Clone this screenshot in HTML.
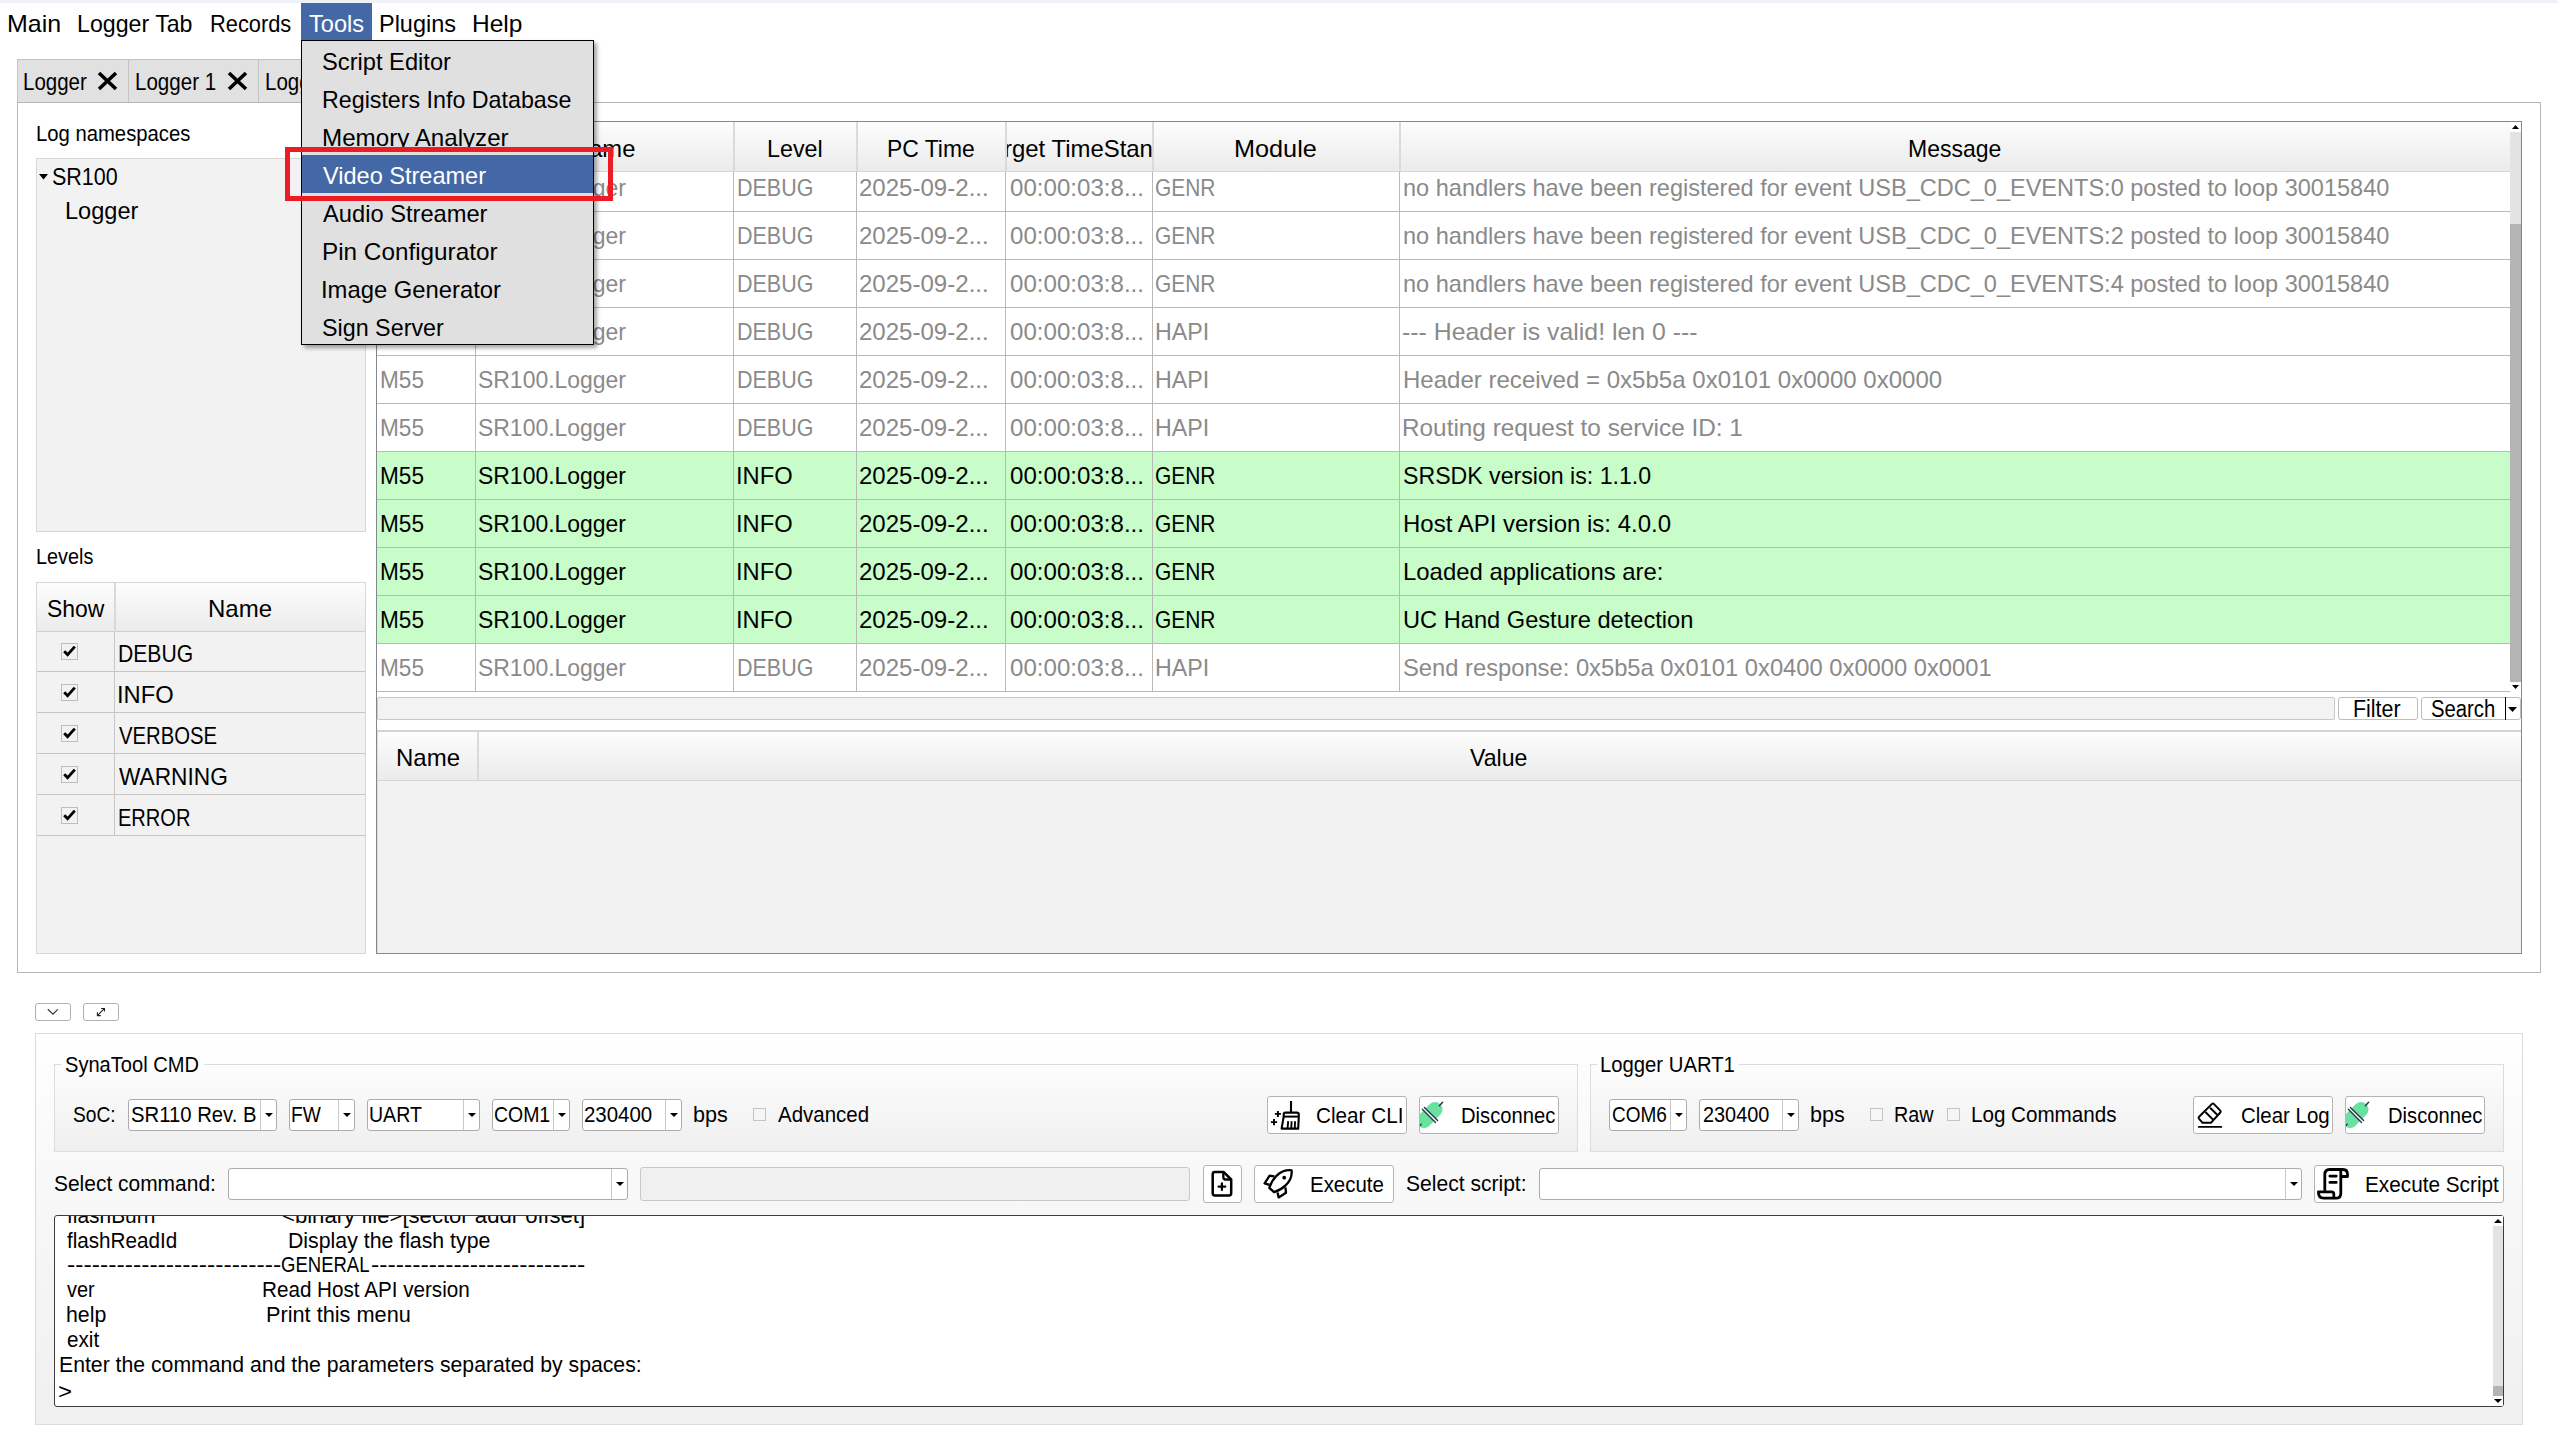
<!DOCTYPE html>
<html><head><meta charset="utf-8"><style>
html,body{margin:0;padding:0;width:2558px;height:1454px;overflow:hidden;background:#fff;position:relative;font-family:"Liberation Sans", sans-serif;}
.r{position:absolute;box-sizing:border-box;}
.t{position:absolute;white-space:pre;line-height:1;transform-origin:0 0;}
svg{position:absolute;overflow:visible;}
</style></head><body>
<div class="r" style="left:0px;top:0px;width:2558px;height:3px;background:#eef1f8;"></div>
<div class="t" style="left:6.96px;top:11.50px;font-size:24px;color:#000;transform:scaleX(1.0388);">Main</div>
<div class="t" style="left:77.03px;top:11.50px;font-size:24px;color:#000;transform:scaleX(0.9651);">Logger Tab</div>
<div class="t" style="left:210.09px;top:11.50px;font-size:24px;color:#000;transform:scaleX(0.9087);">Records</div>
<div class="t" style="left:379.02px;top:11.50px;font-size:24px;color:#000;transform:scaleX(0.9779);">Plugins</div>
<div class="t" style="left:471.98px;top:11.50px;font-size:24px;color:#000;transform:scaleX(1.0206);">Help</div>
<div class="r" style="left:301px;top:3px;width:71px;height:37px;background:#4468a6;"></div>
<div class="t" style="left:309.00px;top:11.50px;font-size:24px;color:#fff;transform:scaleX(0.9817);">Tools</div>
<div class="r" style="left:17px;top:59px;width:112px;height:44px;background:#e1e1e1;border:1px solid #c4c4c4;"></div>
<div class="r" style="left:128px;top:59px;width:131px;height:44px;background:#e1e1e1;border:1px solid #c4c4c4;"></div>
<div class="r" style="left:258px;top:59px;width:134px;height:44px;background:#e1e1e1;border:1px solid #c4c4c4;"></div>
<div class="t" style="left:23.15px;top:69.50px;font-size:24px;color:#000;transform:scaleX(0.8544);">Logger</div>
<div class="t" style="left:135.14px;top:69.50px;font-size:24px;color:#000;transform:scaleX(0.8565);">Logger 1</div>
<div class="t" style="left:265.14px;top:69.50px;font-size:24px;color:#000;transform:scaleX(0.8565);">Logger 2</div>
<svg style="left:97px;top:71px" width="21" height="20" viewBox="0 0 21 20"><path d="M2 2L19 18M19 2L2 18" stroke="#000" stroke-width="3.6" stroke-linecap="butt"/></svg>
<svg style="left:227px;top:71px" width="21" height="20" viewBox="0 0 21 20"><path d="M2 2L19 18M19 2L2 18" stroke="#000" stroke-width="3.6" stroke-linecap="butt"/></svg>
<div class="r" style="left:17px;top:102px;width:2524px;height:871px;background:#fff;border:1px solid #b6b6b6;"></div>
<div class="t" style="left:36.06px;top:124.25px;font-size:21.5px;color:#000;transform:scaleX(0.9426);">Log namespaces</div>
<div class="r" style="left:36px;top:158px;width:330px;height:374px;background:#f2f2f2;border:1px solid #d7d7d7;"></div>
<svg style="left:39px;top:174px" width="9" height="6" viewBox="0 0 9 6"><path d="M0 0H9L4.5 5.5Z" fill="#000"/></svg>
<div class="t" style="left:52.10px;top:165.00px;font-size:24px;color:#000;transform:scaleX(0.8954);">SR100</div>
<div class="t" style="left:64.52px;top:199.00px;font-size:24px;color:#000;transform:scaleX(0.9819);">Logger</div>
<div class="t" style="left:35.58px;top:547.25px;font-size:21.5px;color:#000;transform:scaleX(0.9222);">Levels</div>
<div class="r" style="left:36px;top:582px;width:330px;height:372px;background:#f2f2f2;border:1px solid #d7d7d7;"></div>
<div class="r" style="left:37px;top:583px;width:328px;height:49px;background:linear-gradient(#fdfdfd,#ebebeb);border-bottom:1px solid #cfcfcf;"></div>
<div class="r" style="left:114px;top:583px;width:2px;height:49px;background:#d9d9d9;"></div>
<div class="t" style="left:47.05px;top:596.50px;font-size:24px;color:#000;transform:scaleX(0.9547);">Show</div>
<div class="t" style="left:207.65px;top:596.50px;font-size:24px;color:#000;transform:scaleX(1.0004);">Name</div>
<div class="r" style="left:37px;top:671px;width:328px;height:1px;background:#c6c6c6;"></div>
<div class="t" style="left:118.12px;top:641.50px;font-size:24px;color:#000;transform:scaleX(0.8805);">DEBUG</div>
<div class="r" style="left:61px;top:643px;width:17px;height:17px;background:#f2f2f2;border:1px solid #bdbdbd;"></div>
<svg style="left:63px;top:645px" width="13" height="12" viewBox="0 0 13 12"><path d="M1.2 6.2L4.6 9.6L11.8 1.6" stroke="#000" stroke-width="2.8" fill="none"/></svg>
<div class="r" style="left:37px;top:712px;width:328px;height:1px;background:#c6c6c6;"></div>
<div class="t" style="left:117.02px;top:682.50px;font-size:24px;color:#000;transform:scaleX(0.9879);">INFO</div>
<div class="r" style="left:61px;top:684px;width:17px;height:17px;background:#f2f2f2;border:1px solid #bdbdbd;"></div>
<svg style="left:63px;top:686px" width="13" height="12" viewBox="0 0 13 12"><path d="M1.2 6.2L4.6 9.6L11.8 1.6" stroke="#000" stroke-width="2.8" fill="none"/></svg>
<div class="r" style="left:37px;top:753px;width:328px;height:1px;background:#c6c6c6;"></div>
<div class="t" style="left:119.00px;top:723.50px;font-size:24px;color:#000;transform:scaleX(0.8459);">VERBOSE</div>
<div class="r" style="left:61px;top:725px;width:17px;height:17px;background:#f2f2f2;border:1px solid #bdbdbd;"></div>
<svg style="left:63px;top:727px" width="13" height="12" viewBox="0 0 13 12"><path d="M1.2 6.2L4.6 9.6L11.8 1.6" stroke="#000" stroke-width="2.8" fill="none"/></svg>
<div class="r" style="left:37px;top:794px;width:328px;height:1px;background:#c6c6c6;"></div>
<div class="t" style="left:119.00px;top:764.50px;font-size:24px;color:#000;transform:scaleX(0.9459);">WARNING</div>
<div class="r" style="left:61px;top:766px;width:17px;height:17px;background:#f2f2f2;border:1px solid #bdbdbd;"></div>
<svg style="left:63px;top:768px" width="13" height="12" viewBox="0 0 13 12"><path d="M1.2 6.2L4.6 9.6L11.8 1.6" stroke="#000" stroke-width="2.8" fill="none"/></svg>
<div class="r" style="left:37px;top:835px;width:328px;height:1px;background:#c6c6c6;"></div>
<div class="t" style="left:118.16px;top:805.50px;font-size:24px;color:#000;transform:scaleX(0.8355);">ERROR</div>
<div class="r" style="left:61px;top:807px;width:17px;height:17px;background:#f2f2f2;border:1px solid #bdbdbd;"></div>
<svg style="left:63px;top:809px" width="13" height="12" viewBox="0 0 13 12"><path d="M1.2 6.2L4.6 9.6L11.8 1.6" stroke="#000" stroke-width="2.8" fill="none"/></svg>
<div class="r" style="left:114px;top:632px;width:1px;height:204px;background:#c6c6c6;"></div>
<div class="r" style="left:376px;top:121px;width:2146px;height:833px;background:#fff;border:1px solid #828790;"></div>
<div class="r" style="left:377px;top:451px;width:2133px;height:48px;background:#c8fcc8;"></div>
<div class="r" style="left:377px;top:499px;width:2133px;height:48px;background:#c8fcc8;"></div>
<div class="r" style="left:377px;top:547px;width:2133px;height:48px;background:#c8fcc8;"></div>
<div class="r" style="left:377px;top:595px;width:2133px;height:48px;background:#c8fcc8;"></div>
<div class="r" style="left:377px;top:211px;width:2133px;height:1px;background:#b9b9b9;"></div>
<div class="r" style="left:377px;top:259px;width:2133px;height:1px;background:#b9b9b9;"></div>
<div class="r" style="left:377px;top:307px;width:2133px;height:1px;background:#b9b9b9;"></div>
<div class="r" style="left:377px;top:355px;width:2133px;height:1px;background:#b9b9b9;"></div>
<div class="r" style="left:377px;top:403px;width:2133px;height:1px;background:#b9b9b9;"></div>
<div class="r" style="left:377px;top:451px;width:2133px;height:1px;background:#b9b9b9;"></div>
<div class="r" style="left:377px;top:499px;width:2133px;height:1px;background:#b9b9b9;"></div>
<div class="r" style="left:377px;top:547px;width:2133px;height:1px;background:#b9b9b9;"></div>
<div class="r" style="left:377px;top:595px;width:2133px;height:1px;background:#b9b9b9;"></div>
<div class="r" style="left:377px;top:643px;width:2133px;height:1px;background:#b9b9b9;"></div>
<div class="r" style="left:377px;top:691px;width:2133px;height:1px;background:#b9b9b9;"></div>
<div class="r" style="left:475px;top:171px;width:1px;height:520px;background:#b9b9b9;"></div>
<div class="r" style="left:733px;top:171px;width:1px;height:520px;background:#b9b9b9;"></div>
<div class="r" style="left:856px;top:171px;width:1px;height:520px;background:#b9b9b9;"></div>
<div class="r" style="left:1005px;top:171px;width:1px;height:520px;background:#b9b9b9;"></div>
<div class="r" style="left:1152px;top:171px;width:1px;height:520px;background:#b9b9b9;"></div>
<div class="r" style="left:1399px;top:171px;width:1px;height:520px;background:#b9b9b9;"></div>
<div class="t" style="left:380.06px;top:176.00px;font-size:24px;color:#8a8a8a;transform:scaleX(0.9418);">M55</div>
<div class="t" style="left:478.04px;top:176.00px;font-size:24px;color:#8a8a8a;transform:scaleX(0.9559);">SR100.Logger</div>
<div class="t" style="left:736.60px;top:176.00px;font-size:24px;color:#8a8a8a;transform:scaleX(0.8950);">DEBUG</div>
<div class="t" style="left:859.00px;top:176.00px;font-size:24px;color:#8a8a8a;transform:scaleX(1.0019);">2025-09-2...</div>
<div class="t" style="left:1009.50px;top:176.00px;font-size:24px;color:#8a8a8a;transform:scaleX(1.0040);">00:00:03:8...</div>
<div class="t" style="left:1155.13px;top:176.00px;font-size:24px;color:#8a8a8a;transform:scaleX(0.8720);">GENR</div>
<div class="t" style="left:1402.52px;top:176.00px;font-size:24px;color:#8a8a8a;transform:scaleX(0.9805);">no handlers have been registered for event USB_CDC_0_EVENTS:0 posted to loop 30015840</div>
<div class="t" style="left:380.06px;top:224.00px;font-size:24px;color:#8a8a8a;transform:scaleX(0.9418);">M55</div>
<div class="t" style="left:478.04px;top:224.00px;font-size:24px;color:#8a8a8a;transform:scaleX(0.9559);">SR100.Logger</div>
<div class="t" style="left:736.60px;top:224.00px;font-size:24px;color:#8a8a8a;transform:scaleX(0.8950);">DEBUG</div>
<div class="t" style="left:859.00px;top:224.00px;font-size:24px;color:#8a8a8a;transform:scaleX(1.0019);">2025-09-2...</div>
<div class="t" style="left:1009.50px;top:224.00px;font-size:24px;color:#8a8a8a;transform:scaleX(1.0040);">00:00:03:8...</div>
<div class="t" style="left:1155.13px;top:224.00px;font-size:24px;color:#8a8a8a;transform:scaleX(0.8720);">GENR</div>
<div class="t" style="left:1402.52px;top:224.00px;font-size:24px;color:#8a8a8a;transform:scaleX(0.9805);">no handlers have been registered for event USB_CDC_0_EVENTS:2 posted to loop 30015840</div>
<div class="t" style="left:380.06px;top:272.00px;font-size:24px;color:#8a8a8a;transform:scaleX(0.9418);">M55</div>
<div class="t" style="left:478.04px;top:272.00px;font-size:24px;color:#8a8a8a;transform:scaleX(0.9559);">SR100.Logger</div>
<div class="t" style="left:736.60px;top:272.00px;font-size:24px;color:#8a8a8a;transform:scaleX(0.8950);">DEBUG</div>
<div class="t" style="left:859.00px;top:272.00px;font-size:24px;color:#8a8a8a;transform:scaleX(1.0019);">2025-09-2...</div>
<div class="t" style="left:1009.50px;top:272.00px;font-size:24px;color:#8a8a8a;transform:scaleX(1.0040);">00:00:03:8...</div>
<div class="t" style="left:1155.13px;top:272.00px;font-size:24px;color:#8a8a8a;transform:scaleX(0.8720);">GENR</div>
<div class="t" style="left:1402.52px;top:272.00px;font-size:24px;color:#8a8a8a;transform:scaleX(0.9805);">no handlers have been registered for event USB_CDC_0_EVENTS:4 posted to loop 30015840</div>
<div class="t" style="left:380.06px;top:320.00px;font-size:24px;color:#8a8a8a;transform:scaleX(0.9418);">M55</div>
<div class="t" style="left:478.04px;top:320.00px;font-size:24px;color:#8a8a8a;transform:scaleX(0.9559);">SR100.Logger</div>
<div class="t" style="left:736.60px;top:320.00px;font-size:24px;color:#8a8a8a;transform:scaleX(0.8950);">DEBUG</div>
<div class="t" style="left:859.00px;top:320.00px;font-size:24px;color:#8a8a8a;transform:scaleX(1.0019);">2025-09-2...</div>
<div class="t" style="left:1009.50px;top:320.00px;font-size:24px;color:#8a8a8a;transform:scaleX(1.0040);">00:00:03:8...</div>
<div class="t" style="left:1155.03px;top:320.00px;font-size:24px;color:#8a8a8a;transform:scaleX(0.9672);">HAPI</div>
<div class="t" style="left:1402.46px;top:320.00px;font-size:24px;color:#8a8a8a;transform:scaleX(1.0356);">--- Header is valid! len 0 ---</div>
<div class="t" style="left:380.06px;top:368.00px;font-size:24px;color:#8a8a8a;transform:scaleX(0.9418);">M55</div>
<div class="t" style="left:478.04px;top:368.00px;font-size:24px;color:#8a8a8a;transform:scaleX(0.9559);">SR100.Logger</div>
<div class="t" style="left:736.60px;top:368.00px;font-size:24px;color:#8a8a8a;transform:scaleX(0.8950);">DEBUG</div>
<div class="t" style="left:859.00px;top:368.00px;font-size:24px;color:#8a8a8a;transform:scaleX(1.0019);">2025-09-2...</div>
<div class="t" style="left:1009.50px;top:368.00px;font-size:24px;color:#8a8a8a;transform:scaleX(1.0040);">00:00:03:8...</div>
<div class="t" style="left:1155.03px;top:368.00px;font-size:24px;color:#8a8a8a;transform:scaleX(0.9672);">HAPI</div>
<div class="t" style="left:1402.50px;top:368.00px;font-size:24px;color:#8a8a8a;transform:scaleX(1.0014);">Header received = 0x5b5a 0x0101 0x0000 0x0000</div>
<div class="t" style="left:380.06px;top:416.00px;font-size:24px;color:#8a8a8a;transform:scaleX(0.9418);">M55</div>
<div class="t" style="left:478.04px;top:416.00px;font-size:24px;color:#8a8a8a;transform:scaleX(0.9559);">SR100.Logger</div>
<div class="t" style="left:736.60px;top:416.00px;font-size:24px;color:#8a8a8a;transform:scaleX(0.8950);">DEBUG</div>
<div class="t" style="left:859.00px;top:416.00px;font-size:24px;color:#8a8a8a;transform:scaleX(1.0019);">2025-09-2...</div>
<div class="t" style="left:1009.50px;top:416.00px;font-size:24px;color:#8a8a8a;transform:scaleX(1.0040);">00:00:03:8...</div>
<div class="t" style="left:1155.03px;top:416.00px;font-size:24px;color:#8a8a8a;transform:scaleX(0.9672);">HAPI</div>
<div class="t" style="left:1402.49px;top:416.00px;font-size:24px;color:#8a8a8a;transform:scaleX(1.0140);">Routing request to service ID: 1</div>
<div class="t" style="left:380.06px;top:464.00px;font-size:24px;color:#000;transform:scaleX(0.9418);">M55</div>
<div class="t" style="left:478.04px;top:464.00px;font-size:24px;color:#000;transform:scaleX(0.9559);">SR100.Logger</div>
<div class="t" style="left:735.52px;top:464.00px;font-size:24px;color:#000;transform:scaleX(0.9879);">INFO</div>
<div class="t" style="left:859.00px;top:464.00px;font-size:24px;color:#000;transform:scaleX(1.0019);">2025-09-2...</div>
<div class="t" style="left:1009.50px;top:464.00px;font-size:24px;color:#000;transform:scaleX(1.0040);">00:00:03:8...</div>
<div class="t" style="left:1155.13px;top:464.00px;font-size:24px;color:#000;transform:scaleX(0.8720);">GENR</div>
<div class="t" style="left:1402.54px;top:464.00px;font-size:24px;color:#000;transform:scaleX(0.9637);">SRSDK version is: 1.1.0</div>
<div class="t" style="left:380.06px;top:512.00px;font-size:24px;color:#000;transform:scaleX(0.9418);">M55</div>
<div class="t" style="left:478.04px;top:512.00px;font-size:24px;color:#000;transform:scaleX(0.9559);">SR100.Logger</div>
<div class="t" style="left:735.52px;top:512.00px;font-size:24px;color:#000;transform:scaleX(0.9879);">INFO</div>
<div class="t" style="left:859.00px;top:512.00px;font-size:24px;color:#000;transform:scaleX(1.0019);">2025-09-2...</div>
<div class="t" style="left:1009.50px;top:512.00px;font-size:24px;color:#000;transform:scaleX(1.0040);">00:00:03:8...</div>
<div class="t" style="left:1155.13px;top:512.00px;font-size:24px;color:#000;transform:scaleX(0.8720);">GENR</div>
<div class="t" style="left:1402.50px;top:512.00px;font-size:24px;color:#000;transform:scaleX(0.9996);">Host API version is: 4.0.0</div>
<div class="t" style="left:380.06px;top:560.00px;font-size:24px;color:#000;transform:scaleX(0.9418);">M55</div>
<div class="t" style="left:478.04px;top:560.00px;font-size:24px;color:#000;transform:scaleX(0.9559);">SR100.Logger</div>
<div class="t" style="left:735.52px;top:560.00px;font-size:24px;color:#000;transform:scaleX(0.9879);">INFO</div>
<div class="t" style="left:859.00px;top:560.00px;font-size:24px;color:#000;transform:scaleX(1.0019);">2025-09-2...</div>
<div class="t" style="left:1009.50px;top:560.00px;font-size:24px;color:#000;transform:scaleX(1.0040);">00:00:03:8...</div>
<div class="t" style="left:1155.13px;top:560.00px;font-size:24px;color:#000;transform:scaleX(0.8720);">GENR</div>
<div class="t" style="left:1402.50px;top:560.00px;font-size:24px;color:#000;transform:scaleX(0.9959);">Loaded applications are:</div>
<div class="t" style="left:380.06px;top:608.00px;font-size:24px;color:#000;transform:scaleX(0.9418);">M55</div>
<div class="t" style="left:478.04px;top:608.00px;font-size:24px;color:#000;transform:scaleX(0.9559);">SR100.Logger</div>
<div class="t" style="left:735.52px;top:608.00px;font-size:24px;color:#000;transform:scaleX(0.9879);">INFO</div>
<div class="t" style="left:859.00px;top:608.00px;font-size:24px;color:#000;transform:scaleX(1.0019);">2025-09-2...</div>
<div class="t" style="left:1009.50px;top:608.00px;font-size:24px;color:#000;transform:scaleX(1.0040);">00:00:03:8...</div>
<div class="t" style="left:1155.13px;top:608.00px;font-size:24px;color:#000;transform:scaleX(0.8720);">GENR</div>
<div class="t" style="left:1402.52px;top:608.00px;font-size:24px;color:#000;transform:scaleX(0.9847);">UC Hand Gesture detection</div>
<div class="t" style="left:380.06px;top:656.00px;font-size:24px;color:#8a8a8a;transform:scaleX(0.9418);">M55</div>
<div class="t" style="left:478.04px;top:656.00px;font-size:24px;color:#8a8a8a;transform:scaleX(0.9559);">SR100.Logger</div>
<div class="t" style="left:736.60px;top:656.00px;font-size:24px;color:#8a8a8a;transform:scaleX(0.8950);">DEBUG</div>
<div class="t" style="left:859.00px;top:656.00px;font-size:24px;color:#8a8a8a;transform:scaleX(1.0019);">2025-09-2...</div>
<div class="t" style="left:1009.50px;top:656.00px;font-size:24px;color:#8a8a8a;transform:scaleX(1.0040);">00:00:03:8...</div>
<div class="t" style="left:1155.03px;top:656.00px;font-size:24px;color:#8a8a8a;transform:scaleX(0.9672);">HAPI</div>
<div class="t" style="left:1402.51px;top:656.00px;font-size:24px;color:#8a8a8a;transform:scaleX(0.9891);">Send response: 0x5b5a 0x0101 0x0400 0x0000 0x0001</div>
<div class="r" style="left:377px;top:122px;width:2133px;height:50px;background:linear-gradient(#fdfdfd,#ebebeb);border-bottom:1px solid #d5d5d5;"></div>
<div class="r" style="left:475px;top:122px;width:2px;height:49px;background:#dadada;"></div>
<div class="r" style="left:733px;top:122px;width:2px;height:49px;background:#dadada;"></div>
<div class="r" style="left:856px;top:122px;width:2px;height:49px;background:#dadada;"></div>
<div class="r" style="left:1005px;top:122px;width:2px;height:49px;background:#dadada;"></div>
<div class="r" style="left:1152px;top:122px;width:2px;height:49px;background:#dadada;"></div>
<div class="r" style="left:1399px;top:122px;width:2px;height:49px;background:#dadada;"></div>
<div class="t" style="left:572.01px;top:136.50px;font-size:24px;color:#000;transform:scaleX(0.9893);">Name</div>
<div class="t" style="left:767.33px;top:136.50px;font-size:24px;color:#000;transform:scaleX(0.9702);">Level</div>
<div class="t" style="left:886.65px;top:136.50px;font-size:24px;color:#000;transform:scaleX(0.9528);">PC Time</div>
<div style="position:absolute;left:1007px;top:122px;width:145px;height:49px;overflow:hidden">
<div class="t" style="left:-3.00px;top:14.50px;font-size:24px;color:#000;transform:scaleX(0.9967);">rget TimeStan</div>
</div>
<div class="t" style="left:1234.25px;top:136.50px;font-size:24px;color:#000;transform:scaleX(1.0521);">Module</div>
<div class="t" style="left:1908.04px;top:136.50px;font-size:24px;color:#000;transform:scaleX(0.9580);">Message</div>
<div class="r" style="left:2510px;top:122px;width:11px;height:569px;background:#e3e3e3;"></div>
<div class="r" style="left:2510px;top:122px;width:11px;height:10px;background:#fff;"></div>
<div class="r" style="left:2510px;top:682px;width:11px;height:9px;background:#fff;"></div>
<div class="r" style="left:2510px;top:224px;width:11px;height:458px;background:#b4b4b4;"></div>
<svg style="left:2512px;top:125px" width="7" height="4" viewBox="0 0 7 4"><path d="M0 4H7L3.5 0Z" fill="#000"/></svg>
<svg style="left:2512px;top:685px" width="7" height="4" viewBox="0 0 7 4"><path d="M0 0H7L3.5 4Z" fill="#000"/></svg>
<div class="r" style="left:377px;top:697px;width:1958px;height:23px;background:#f3f3f3;border:1px solid #c8c8c8;border-radius:2px;"></div>
<div class="r" style="left:2338px;top:697px;width:80px;height:23px;background:#fff;border:1px solid #bdbdbd;border-radius:3px;"></div>
<div class="t" style="left:2353.07px;top:697.50px;font-size:23px;color:#000;transform:scaleX(0.9316);">Filter</div>
<div class="r" style="left:2421px;top:697px;width:100px;height:23px;background:#fff;border:1px solid #bdbdbd;border-radius:3px;"></div>
<div class="t" style="left:2431.12px;top:697.50px;font-size:23px;color:#000;transform:scaleX(0.8821);">Search</div>
<div class="r" style="left:2505px;top:697px;width:1px;height:23px;background:#000;"></div>
<svg style="left:2508px;top:707px" width="9" height="5" viewBox="0 0 9 5"><path d="M0 0H9L4.5 5Z" fill="#000"/></svg>
<div class="r" style="left:377px;top:730px;width:2144px;height:223px;background:#f2f2f2;border-top:2px solid #d4d4d4;border-left:1px solid #dcdcdc;"></div>
<div class="r" style="left:378px;top:732px;width:2143px;height:49px;background:linear-gradient(#fdfdfd,#ebebeb);border-bottom:1px solid #d5d5d5;"></div>
<div class="r" style="left:477px;top:732px;width:2px;height:48px;background:#dadada;"></div>
<div class="t" style="left:395.60px;top:745.50px;font-size:24px;color:#000;transform:scaleX(1.0004);">Name</div>
<div class="t" style="left:1469.50px;top:745.50px;font-size:24px;color:#000;transform:scaleX(0.9620);">Value</div>
<div class="r" style="left:35px;top:1003px;width:36px;height:18px;background:#fff;border:1px solid #b0b0b0;border-radius:3px;"></div>
<div class="r" style="left:83px;top:1003px;width:36px;height:18px;background:#fff;border:1px solid #b0b0b0;border-radius:3px;"></div>
<svg style="left:44px;top:1005px" width="18" height="14" viewBox="44 1005 18 14"><path d="M47.8 1009.3L53 1014.2L57.8 1009.3" stroke="#333" stroke-width="1.2" fill="none"/></svg>
<svg style="left:94px;top:1005px" width="14" height="14" viewBox="94 1005 14 14"><path d="M97.6 1015.3L104.3 1008.6M101.1 1008.5H104.5V1011.6M97.4 1012.2V1015.6H100.8" stroke="#222" stroke-width="1.1" fill="none"/></svg>
<div class="r" style="left:35px;top:1033px;width:2488px;height:392px;background:linear-gradient(#ffffff,#f9f9f9 30%,#f0f0f0);border:1px solid #dcdcdc;"></div>
<div class="r" style="left:54px;top:1064px;width:1524px;height:88px;background:linear-gradient(#fdfdfd,#efefef);border:1px solid #dcdcdc;border-top:none;"></div>
<div class="r" style="left:54px;top:1064px;width:7px;height:1px;background:#dcdcdc;"></div>
<div class="r" style="left:204px;top:1064px;width:1374px;height:1px;background:#dcdcdc;"></div>
<div class="t" style="left:65.00px;top:1054.75px;font-size:21.5px;color:#000;transform:scaleX(0.9338);">SynaTool CMD</div>
<div class="r" style="left:1590px;top:1064px;width:914px;height:88px;background:linear-gradient(#fdfdfd,#efefef);border:1px solid #dcdcdc;border-top:none;"></div>
<div class="r" style="left:1590px;top:1064px;width:7px;height:1px;background:#dcdcdc;"></div>
<div class="r" style="left:1739px;top:1064px;width:765px;height:1px;background:#dcdcdc;"></div>
<div class="t" style="left:1600.36px;top:1054.75px;font-size:21.5px;color:#000;transform:scaleX(0.9429);">Logger UART1</div>
<div class="t" style="left:73.20px;top:1105.05px;font-size:21.5px;color:#000;transform:scaleX(0.8927);">SoC:</div>
<div class="r" style="left:128px;top:1099px;width:149px;height:32px;background:#fff;border:1px solid #acacac;border-radius:3px;"></div>
<div class="r" style="left:260px;top:1100px;width:1px;height:30px;background:#c8c8c8;"></div>
<svg style="left:264.5px;top:1113.0px" width="8" height="4" viewBox="0 0 8 4"><path d="M0 0H8L4 4Z" fill="#000"/></svg>
<div class="t" style="left:131.00px;top:1105.25px;font-size:21.5px;color:#000;transform:scaleX(0.9435);">SR110 Rev. B</div>
<div class="r" style="left:289px;top:1099px;width:66px;height:32px;background:#fff;border:1px solid #acacac;border-radius:3px;"></div>
<div class="r" style="left:338px;top:1100px;width:1px;height:30px;background:#c8c8c8;"></div>
<svg style="left:342.5px;top:1113.0px" width="8" height="4" viewBox="0 0 8 4"><path d="M0 0H8L4 4Z" fill="#000"/></svg>
<div class="t" style="left:291.11px;top:1105.25px;font-size:21.5px;color:#000;transform:scaleX(0.8903);">FW</div>
<div class="r" style="left:367px;top:1099px;width:113px;height:32px;background:#fff;border:1px solid #acacac;border-radius:3px;"></div>
<div class="r" style="left:463px;top:1100px;width:1px;height:30px;background:#c8c8c8;"></div>
<svg style="left:467.5px;top:1113.0px" width="8" height="4" viewBox="0 0 8 4"><path d="M0 0H8L4 4Z" fill="#000"/></svg>
<div class="t" style="left:369.09px;top:1105.25px;font-size:21.5px;color:#000;transform:scaleX(0.9087);">UART</div>
<div class="r" style="left:492px;top:1099px;width:78px;height:32px;background:#fff;border:1px solid #acacac;border-radius:3px;"></div>
<div class="r" style="left:553px;top:1100px;width:1px;height:30px;background:#c8c8c8;"></div>
<svg style="left:557.5px;top:1113.0px" width="8" height="4" viewBox="0 0 8 4"><path d="M0 0H8L4 4Z" fill="#000"/></svg>
<div class="t" style="left:494.10px;top:1105.25px;font-size:21.5px;color:#000;transform:scaleX(0.9043);">COM1</div>
<div class="r" style="left:582px;top:1099px;width:100px;height:32px;background:#fff;border:1px solid #acacac;border-radius:3px;"></div>
<div class="r" style="left:665px;top:1100px;width:1px;height:30px;background:#c8c8c8;"></div>
<svg style="left:669.5px;top:1113.0px" width="8" height="4" viewBox="0 0 8 4"><path d="M0 0H8L4 4Z" fill="#000"/></svg>
<div class="t" style="left:584.05px;top:1105.25px;font-size:21.5px;color:#000;transform:scaleX(0.9507);">230400</div>
<div class="t" style="left:693.30px;top:1105.05px;font-size:21.5px;color:#000;transform:scaleX(1.0026);">bps</div>
<div class="r" style="left:753px;top:1108px;width:13px;height:13px;background:#f6f6f6;border:1px solid #c4c4c4;"></div>
<div class="t" style="left:777.60px;top:1105.05px;font-size:21.5px;color:#000;transform:scaleX(0.9528);">Advanced</div>
<div class="r" style="left:1267px;top:1096px;width:140px;height:38px;background:#fff;border:1px solid #b4b4b4;border-radius:3px;"></div>
<div class="t" style="left:1316.44px;top:1106.25px;font-size:21.5px;color:#000;transform:scaleX(0.9632);">Clear CLI</div>
<div class="r" style="left:1419px;top:1096px;width:140px;height:38px;background:#fff;border:1px solid #b4b4b4;border-radius:3px;"></div>
<div class="t" style="left:1461.36px;top:1106.25px;font-size:21.5px;color:#000;transform:scaleX(0.9395);">Disconnec</div>
<div class="r" style="left:2193px;top:1096px;width:140px;height:38px;background:#fff;border:1px solid #b4b4b4;border-radius:3px;"></div>
<div class="t" style="left:2241.05px;top:1106.25px;font-size:21.5px;color:#000;transform:scaleX(0.9511);">Clear Log</div>
<div class="r" style="left:2345px;top:1096px;width:140px;height:38px;background:#fff;border:1px solid #b4b4b4;border-radius:3px;"></div>
<div class="t" style="left:2387.56px;top:1106.25px;font-size:21.5px;color:#000;transform:scaleX(0.9395);">Disconnec</div>
<div class="r" style="left:1609px;top:1099px;width:78px;height:32px;background:#fff;border:1px solid #acacac;border-radius:3px;"></div>
<div class="r" style="left:1670px;top:1100px;width:1px;height:30px;background:#c8c8c8;"></div>
<svg style="left:1674.5px;top:1113.0px" width="8" height="4" viewBox="0 0 8 4"><path d="M0 0H8L4 4Z" fill="#000"/></svg>
<div class="t" style="left:1611.62px;top:1105.25px;font-size:21.5px;color:#000;transform:scaleX(0.8829);">COM6</div>
<div class="r" style="left:1699px;top:1099px;width:100px;height:32px;background:#fff;border:1px solid #acacac;border-radius:3px;"></div>
<div class="r" style="left:1782px;top:1100px;width:1px;height:30px;background:#c8c8c8;"></div>
<svg style="left:1786.5px;top:1113.0px" width="8" height="4" viewBox="0 0 8 4"><path d="M0 0H8L4 4Z" fill="#000"/></svg>
<div class="t" style="left:1703.28px;top:1105.25px;font-size:21.5px;color:#000;transform:scaleX(0.9239);">230400</div>
<div class="t" style="left:1810.00px;top:1105.05px;font-size:21.5px;color:#000;transform:scaleX(1.0026);">bps</div>
<div class="r" style="left:1870px;top:1108px;width:13px;height:13px;background:#f6f6f6;border:1px solid #c4c4c4;"></div>
<div class="t" style="left:1894.08px;top:1105.05px;font-size:21.5px;color:#000;transform:scaleX(0.9180);">Raw</div>
<div class="r" style="left:1947px;top:1108px;width:13px;height:13px;background:#f6f6f6;border:1px solid #c4c4c4;"></div>
<div class="t" style="left:1971.04px;top:1105.05px;font-size:21.5px;color:#000;transform:scaleX(0.9585);">Log Commands</div>
<div class="t" style="left:53.80px;top:1174.25px;font-size:21.5px;color:#000;transform:scaleX(0.9744);">Select command:</div>
<div class="r" style="left:228px;top:1168px;width:400px;height:32px;background:#fff;border:1px solid #acacac;border-radius:3px;"></div>
<div class="r" style="left:611px;top:1169px;width:1px;height:30px;background:#c8c8c8;"></div>
<svg style="left:615.5px;top:1182.0px" width="8" height="4" viewBox="0 0 8 4"><path d="M0 0H8L4 4Z" fill="#000"/></svg>
<div class="r" style="left:640px;top:1167px;width:550px;height:34px;background:#f0f0f0;border:1px solid #c8c8c8;border-radius:3px;"></div>
<div class="r" style="left:1203px;top:1165px;width:39px;height:38px;background:#fff;border:1px solid #b4b4b4;border-radius:3px;"></div>
<div class="r" style="left:1254px;top:1165px;width:140px;height:38px;background:#fff;border:1px solid #b4b4b4;border-radius:3px;"></div>
<div class="t" style="left:1309.85px;top:1175.25px;font-size:21.5px;color:#000;transform:scaleX(0.9508);">Execute</div>
<div class="t" style="left:1406.00px;top:1174.25px;font-size:21.5px;color:#000;transform:scaleX(0.9796);">Select script:</div>
<div class="r" style="left:1539px;top:1168px;width:763px;height:32px;background:#fff;border:1px solid #acacac;border-radius:3px;"></div>
<div class="r" style="left:2285px;top:1169px;width:1px;height:30px;background:#c8c8c8;"></div>
<svg style="left:2289.5px;top:1182.0px" width="8" height="4" viewBox="0 0 8 4"><path d="M0 0H8L4 4Z" fill="#000"/></svg>
<div class="r" style="left:2314px;top:1165px;width:190px;height:38px;background:#fff;border:1px solid #b4b4b4;border-radius:3px;"></div>
<div class="t" style="left:2364.63px;top:1175.25px;font-size:21.5px;color:#000;transform:scaleX(0.9655);">Execute Script</div>
<svg style="left:1268px;top:1098px;overflow:hidden;" width="36" height="34" viewBox="1268 1098 36 34"><path d="M1291 1101V1112.8" stroke="#000" stroke-width="2.1"/><path d="M1285.5 1112.6H1296.8Q1298.8 1112.6 1298.8 1114.6V1116.5L1298.2 1128.6H1281.6L1283.7 1116.5V1114.6Q1283.7 1112.6 1285.5 1112.6Z" stroke="#000" stroke-width="2.1" fill="none" stroke-linejoin="round"/><path d="M1283.7 1116.6H1298.8" stroke="#000" stroke-width="2"/><path d="M1288.2 1121.2L1287.6 1128M1291.6 1121.2L1291.3 1128M1295 1121.2L1294.8 1128" stroke="#000" stroke-width="1.9"/><path d="M1277.9 1110.9V1116.9M1274.9 1113.9H1280.9M1274 1119V1125.2M1270.9 1122.1H1277.1" stroke="#000" stroke-width="1.9"/></svg>
<svg style="left:1420px;top:1097px;overflow:hidden;" width="30" height="36" viewBox="1420 1097 30 36"><path d="M1435 1109.5L1424.1 1120.4" stroke="#68e29e" stroke-width="15" stroke-linecap="round"/><path d="M1423.4 1108.4L1436.6 1121.6" stroke="#fff" stroke-width="2.2"/><path d="M1424.4 1107.4L1437.6 1120.6M1422.3 1109.3L1435.5 1122.5" stroke="#28324b" stroke-width="1.35" stroke-linecap="round"/><path d="M1439.4 1105.7L1442.6 1102.3M1418 1127.5L1421.2 1124.3" stroke="#28324b" stroke-width="1.5" stroke-linecap="round"/></svg>
<svg style="left:2346px;top:1097px;overflow:hidden;" width="30" height="36" viewBox="2346 1097 30 36"><path d="M2361 1109.5L2350.1 1120.4" stroke="#68e29e" stroke-width="15" stroke-linecap="round"/><path d="M2349.4 1108.4L2362.6 1121.6" stroke="#fff" stroke-width="2.2"/><path d="M2350.4 1107.4L2363.6 1120.6M2348.3 1109.3L2361.5 1122.5" stroke="#28324b" stroke-width="1.35" stroke-linecap="round"/><path d="M2365.4 1105.7L2368.6 1102.3M2344 1127.5L2347.2 1124.3" stroke="#28324b" stroke-width="1.5" stroke-linecap="round"/></svg>
<svg style="left:2195px;top:1100px;overflow:hidden;" width="30" height="30" viewBox="2195 1100 30 30"><path d="M2202.6 1122.8L2198.9 1118.6Q2198.2 1117.7 2199.1 1116.8L2212 1103.9Q2212.9 1103 2213.8 1103.9L2220.3 1110.6Q2221.2 1111.6 2220.3 1112.5L2210.9 1122.8Z" stroke="#000" stroke-width="2" fill="none" stroke-linejoin="round"/><path d="M2205.4 1112L2213 1119.6M2210.1 1107.8L2217.4 1115" stroke="#000" stroke-width="2"/><path d="M2198.8 1126.9H2221.3" stroke="#000" stroke-width="1.9" stroke-linecap="round"/></svg>
<svg style="left:1206px;top:1167px;overflow:hidden;" width="32" height="34" viewBox="1206 1167 32 34"><path d="M1214.9 1171.9H1223.5L1231.2 1179.5V1193.2Q1231.2 1195.4 1229 1195.4H1214.9Q1212.7 1195.4 1212.7 1193.2V1174.1Q1212.7 1171.9 1214.9 1171.9Z" stroke="#000" stroke-width="2.5" fill="none" stroke-linejoin="round"/><path d="M1223.3 1172.5V1177Q1223.3 1179.5 1225.8 1179.5H1230.6" stroke="#000" stroke-width="2.3" fill="none"/><path d="M1221.9 1183.3V1190M1218.5 1186.6H1225.3" stroke="#000" stroke-width="2.2" stroke-linecap="round"/></svg>
<svg style="left:1260px;top:1165px;overflow:hidden;" width="36" height="36" viewBox="1260 1165 36 36"><path d="M1291.6 1170.3Q1283 1169.5 1276.5 1175.8Q1271.5 1181 1269.3 1187.8L1274 1192.2Q1280.5 1190.3 1285.6 1185.4Q1292.5 1178.8 1291.6 1170.3Z" stroke="#000" stroke-width="2.3" fill="none" stroke-linejoin="round"/><path d="M1274.4 1176.4L1269.6 1175.7L1264.6 1183.4L1269.6 1184.9" stroke="#000" stroke-width="2.3" fill="none" stroke-linejoin="round"/><path d="M1285.4 1187.4L1286 1192.8L1278.6 1197.4L1277.6 1192.4" stroke="#000" stroke-width="2.3" fill="none" stroke-linejoin="round"/><circle cx="1284.2" cy="1177.7" r="1.9" fill="#000"/></svg>
<svg style="left:2315px;top:1166px;overflow:hidden;" width="36" height="36" viewBox="2315 1166 36 36"><path d="M2324.8 1190.8V1174.6Q2324.8 1169.5 2329.6 1169.5H2343Q2347.5 1169.5 2347.5 1174.4V1176.5H2341.3" stroke="#000" stroke-width="2.8" fill="none" stroke-linejoin="round"/><path d="M2340.8 1170V1193.4Q2340.8 1198.2 2335.8 1198.2H2323.6Q2318.4 1198.2 2318.4 1191.8H2331.6Q2333.8 1191.8 2333.8 1194V1197.6" stroke="#000" stroke-width="2.8" fill="none" stroke-linejoin="round"/><path d="M2329.8 1176.1H2336.3M2329.8 1182.4H2336.3" stroke="#000" stroke-width="2.6" stroke-linecap="round"/></svg>
<div class="r" style="left:54px;top:1215px;width:2450px;height:192px;background:#fff;border:1px solid #3c3c3c;border-radius:3px;"></div>
<div style="position:absolute;left:55px;top:1216px;width:2438px;height:190px;overflow:hidden">
<div class="t" style="left:11.70px;top:-9.75px;font-size:21.5px;color:#000;transform:scaleX(0.9725);">flashBurn</div>
<div class="t" style="left:227.37px;top:-9.75px;font-size:21.5px;color:#000;transform:scaleX(1.0279);">&lt;binary file&gt;[sector addr offset]</div>
<div class="t" style="left:11.70px;top:15.25px;font-size:21.5px;color:#000;transform:scaleX(0.9597);">flashReadId</div>
<div class="t" style="left:233.31px;top:15.25px;font-size:21.5px;color:#000;transform:scaleX(0.9901);">Display the flash type</div>
<div class="t" style="left:11.70px;top:39.25px;font-size:21.5px;color:#000;transform:scaleX(1.1506);">--------------------------</div>
<div class="t" style="left:226.14px;top:39.25px;font-size:21.5px;color:#000;transform:scaleX(0.8615);">GENERAL</div>
<div class="t" style="left:315.50px;top:39.25px;font-size:21.5px;color:#000;transform:scaleX(1.1506);">--------------------------</div>
<div class="t" style="left:11.70px;top:64.25px;font-size:21.5px;color:#000;transform:scaleX(0.9257);">ver</div>
<div class="t" style="left:207.04px;top:64.25px;font-size:21.5px;color:#000;transform:scaleX(0.9604);">Read Host API version</div>
<div class="t" style="left:10.71px;top:89.25px;font-size:21.5px;color:#000;transform:scaleX(0.9901);">help</div>
<div class="t" style="left:210.99px;top:89.25px;font-size:21.5px;color:#000;transform:scaleX(1.0096);">Print this menu</div>
<div class="t" style="left:11.70px;top:114.25px;font-size:21.5px;color:#000;transform:scaleX(0.9617);">exit</div>
<div class="t" style="left:3.61px;top:139.25px;font-size:21.5px;color:#000;transform:scaleX(0.9869);">Enter the command and the parameters separated by spaces:</div>
<div class="t" style="left:3.48px;top:165.75px;font-size:21.5px;color:#000;transform:scaleX(1.1182);">&gt;</div>
</div>
<div class="r" style="left:2493px;top:1216px;width:10px;height:190px;background:#e3e3e3;"></div>
<div class="r" style="left:2493px;top:1216px;width:10px;height:10px;background:#fff;"></div>
<div class="r" style="left:2493px;top:1396px;width:10px;height:10px;background:#fff;"></div>
<div class="r" style="left:2493px;top:1386px;width:10px;height:10px;background:#b4b4b4;"></div>
<svg style="left:2494px;top:1219px" width="8" height="4" viewBox="0 0 8 4"><path d="M0 4H8L4 0Z" fill="#000"/></svg>
<svg style="left:2494px;top:1399px" width="8" height="4" viewBox="0 0 8 4"><path d="M0 0H8L4 4Z" fill="#000"/></svg>
<div class="r" style="left:301px;top:40px;width:293px;height:305px;background:#e0e0e0;border:1px solid #000;box-shadow:3px 3px 4px rgba(0,0,0,0.35);"></div>
<div class="r" style="left:302px;top:155px;width:291px;height:38px;background:#4468a6;"></div>
<div class="t" style="left:322.31px;top:49.50px;font-size:24px;color:#000;transform:scaleX(0.9868);">Script Editor</div>
<div class="t" style="left:322.33px;top:87.50px;font-size:24px;color:#000;transform:scaleX(0.9683);">Registers Info Database</div>
<div class="t" style="left:322.29px;top:125.50px;font-size:24px;color:#000;transform:scaleX(1.0069);">Memory Analyzer</div>
<div class="t" style="left:323.30px;top:163.50px;font-size:24px;color:#fff;transform:scaleX(0.9800);">Video Streamer</div>
<div class="t" style="left:323.30px;top:201.50px;font-size:24px;color:#000;transform:scaleX(0.9865);">Audio Streamer</div>
<div class="t" style="left:322.29px;top:239.50px;font-size:24px;color:#000;transform:scaleX(1.0120);">Pin Configurator</div>
<div class="t" style="left:321.32px;top:277.50px;font-size:24px;color:#000;transform:scaleX(0.9920);">Image Generator</div>
<div class="t" style="left:322.33px;top:315.50px;font-size:24px;color:#000;transform:scaleX(0.9711);">Sign Server</div>
<div class="r" style="left:285px;top:147px;width:328px;height:54px;border:5px solid #ed1c24;"></div>
</body></html>
